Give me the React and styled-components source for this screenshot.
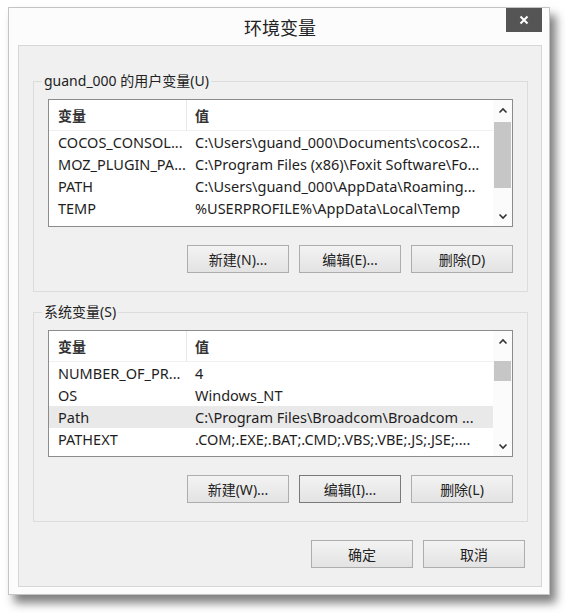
import React from 'react'
import styled, { createGlobalStyle } from 'styled-components'

const GlobalStyle = createGlobalStyle`
    html, body {
        margin: 0;
        background: #fff;
    }
    body {
        font-family: "Noto Sans", "Noto Sans CJK SC", sans-serif;
        color: #1e1e1e;
    }
`

const Page = styled.div`
    width: 566px;
    height: 613px;
    box-sizing: border-box;
    padding: 7px 0 0 8px;
    overflow: hidden;
`

const Window = styled.div`
    width: 542px;
    height: 588px;
    box-sizing: border-box;
    background: #fcfcfc;
    border: 1px solid #c4c4c4;
    box-shadow: 6px 8px 9px rgba(0, 0, 0, 0.5);
    padding: 0 7px 7px 9px;
    display: flex;
    flex-direction: column;
`

const TitleBar = styled.div`
    height: 37px;
    display: grid;
    grid-template-columns: 1fr auto 1fr;
    align-items: center;
`

const Title = styled.div`
    grid-column: 2;
    font-size: 18px;
    color: #222;
    font-family: "Noto Sans CJK SC", sans-serif;
`

const CloseButton = styled.div`
    grid-column: 3;
    justify-self: end;
    align-self: start;
    width: 36px;
    height: 24px;
    background: #555;
    display: flex;
    align-items: center;
    justify-content: center;
`

const Client = styled.div`
    flex: 1;
    background: #f0f0f0;
    border: 1px solid #d6d6d6;
    padding: 25px 13px 0 14px;
    display: flex;
    flex-direction: column;
`

const Group = styled.fieldset`
    margin: ${p => (p.second ? '10px' : '0')} 0 0 0;
    padding: 0;
    border: 1px solid #dcdcdc;
    min-width: 0;
`

const Legend = styled.legend`
    margin-left: 8px;
    padding: 0 2px;
    font-size: 14px;
    line-height: 20px;
    color: #222;
`

const GroupBody = styled.div`
    padding: 0 14px 18px 14px;
`

const List = styled.div`
    margin-top: 8px;
    height: ${p => p.height}px;
    box-sizing: border-box;
    border: 1px solid #8c8c8c;
    background: #fff;
    display: flex;
`

const Table = styled.div`
    flex: 1;
    display: flex;
    flex-direction: column;
    overflow: hidden;
`

const HeaderRow = styled.div`
    height: 30px;
    display: flex;
    border-bottom: 1px solid #f0f0f0;
    font-family: "Noto Sans CJK SC", sans-serif;
    font-weight: 700;
    font-size: 14px;
    color: #333;
`

const Row = styled.div`
    height: 22px;
    display: flex;
    align-items: center;
    font-size: 14.5px;
    background: ${p => (p.selected ? '#e9e9e9' : 'transparent')};
`

const NameCell = styled.div`
    width: 138px;
    box-sizing: border-box;
    padding-left: 9px;
    white-space: nowrap;
    overflow: hidden;
    display: flex;
    align-items: center;
    height: 100%;
`

const HeaderName = styled(NameCell)`
    border-right: 1px solid #e8e8e8;
`

const ValueCell = styled.div`
    flex: 1;
    padding-left: 8px;
    white-space: nowrap;
    overflow: hidden;
    display: flex;
    align-items: center;
    height: 100%;
`

const ScrollBar = styled.div`
    width: 19px;
    display: flex;
    flex-direction: column;
    background: #fbfbfb;
`

const Arrow = styled.div`
    height: 20px;
    display: flex;
    align-items: center;
    justify-content: center;
`

const Track = styled.div`
    flex: 1;
    padding: 0 1px;
`

const Thumb = styled.div`
    margin-top: ${p => p.top}px;
    height: ${p => p.size}px;
    background: #c6c6c6;
`

const ButtonRow = styled.div`
    display: flex;
    justify-content: flex-end;
    gap: 10px;
    margin-top: ${p => p.top || 18}px;
    padding-right: ${p => p.right || 0}px;
`

const Button = styled.div`
    width: 102px;
    height: 28px;
    box-sizing: border-box;
    border: 1px solid ${p => (p.focused ? '#7a7a7a' : '#adadad')};
    background: linear-gradient(#f3f3f3, #e3e3e3);
    display: flex;
    align-items: center;
    justify-content: center;
    font-size: 14px;
    color: #222;
`

const Chevron = ({ down }) => (
    <svg width="10" height="7" viewBox="0 0 10 7">
        <path
            d={down ? 'M1.5 1.5 L5 5 L8.5 1.5' : 'M1.5 5.5 L5 2 L8.5 5.5'}
            fill="none"
            stroke="#333"
            strokeWidth="1.6"
        />
    </svg>
)

function VarList({ rows, height, thumbTop, thumbSize }) {
    return (
        <List height={height}>
            <Table>
                <HeaderRow>
                    <HeaderName>变量</HeaderName>
                    <ValueCell>值</ValueCell>
                </HeaderRow>
                {rows.map(r => (
                    <Row key={r.name} selected={r.selected}>
                        <NameCell>{r.name}</NameCell>
                        <ValueCell>{r.value}</ValueCell>
                    </Row>
                ))}
            </Table>
            <ScrollBar>
                <Arrow><Chevron /></Arrow>
                <Track>
                    <Thumb top={thumbTop} size={thumbSize} />
                </Track>
                <Arrow><Chevron down /></Arrow>
            </ScrollBar>
        </List>
    )
}

const userVars = [
    { name: 'COCOS_CONSOL...', value: 'C:\\Users\\guand_000\\Documents\\cocos2...' },
    { name: 'MOZ_PLUGIN_PA...', value: 'C:\\Program Files (x86)\\Foxit Software\\Fo...' },
    { name: 'PATH', value: 'C:\\Users\\guand_000\\AppData\\Roaming...' },
    { name: 'TEMP', value: '%USERPROFILE%\\AppData\\Local\\Temp' },
]

const sysVars = [
    { name: 'NUMBER_OF_PR...', value: '4' },
    { name: 'OS', value: 'Windows_NT' },
    { name: 'Path', value: 'C:\\Program Files\\Broadcom\\Broadcom ...', selected: true },
    { name: 'PATHEXT', value: '.COM;.EXE;.BAT;.CMD;.VBS;.VBE;.JS;.JSE;....' },
]

export default function App() {
    return (
        <Page>
            <GlobalStyle />
            <Window>
                <TitleBar>
                    <Title>环境变量</Title>
                    <CloseButton>
                        <svg width="10" height="10" viewBox="0 0 10 10">
                            <path d="M1.5 1.5 L8.5 8.5 M8.5 1.5 L1.5 8.5" stroke="#fff" strokeWidth="2" />
                        </svg>
                    </CloseButton>
                </TitleBar>
                <Client>
                    <Group>
                        <Legend>guand_000 的用户变量(U)</Legend>
                        <GroupBody>
                            <VarList rows={userVars} height={128} thumbTop={2} thumbSize={66} />
                            <ButtonRow>
                                <Button>新建(N)...</Button>
                                <Button>编辑(E)...</Button>
                                <Button>删除(D)</Button>
                            </ButtonRow>
                        </GroupBody>
                    </Group>
                    <Group second>
                        <Legend>系统变量(S)</Legend>
                        <GroupBody>
                            <VarList rows={sysVars} height={127} thumbTop={10} thumbSize={20} />
                            <ButtonRow>
                                <Button>新建(W)...</Button>
                                <Button focused>编辑(I)...</Button>
                                <Button>删除(L)</Button>
                            </ButtonRow>
                        </GroupBody>
                    </Group>
                    <ButtonRow top={18} right={3}>
                        <Button>确定</Button>
                        <Button>取消</Button>
                    </ButtonRow>
                </Client>
            </Window>
        </Page>
    )
}
